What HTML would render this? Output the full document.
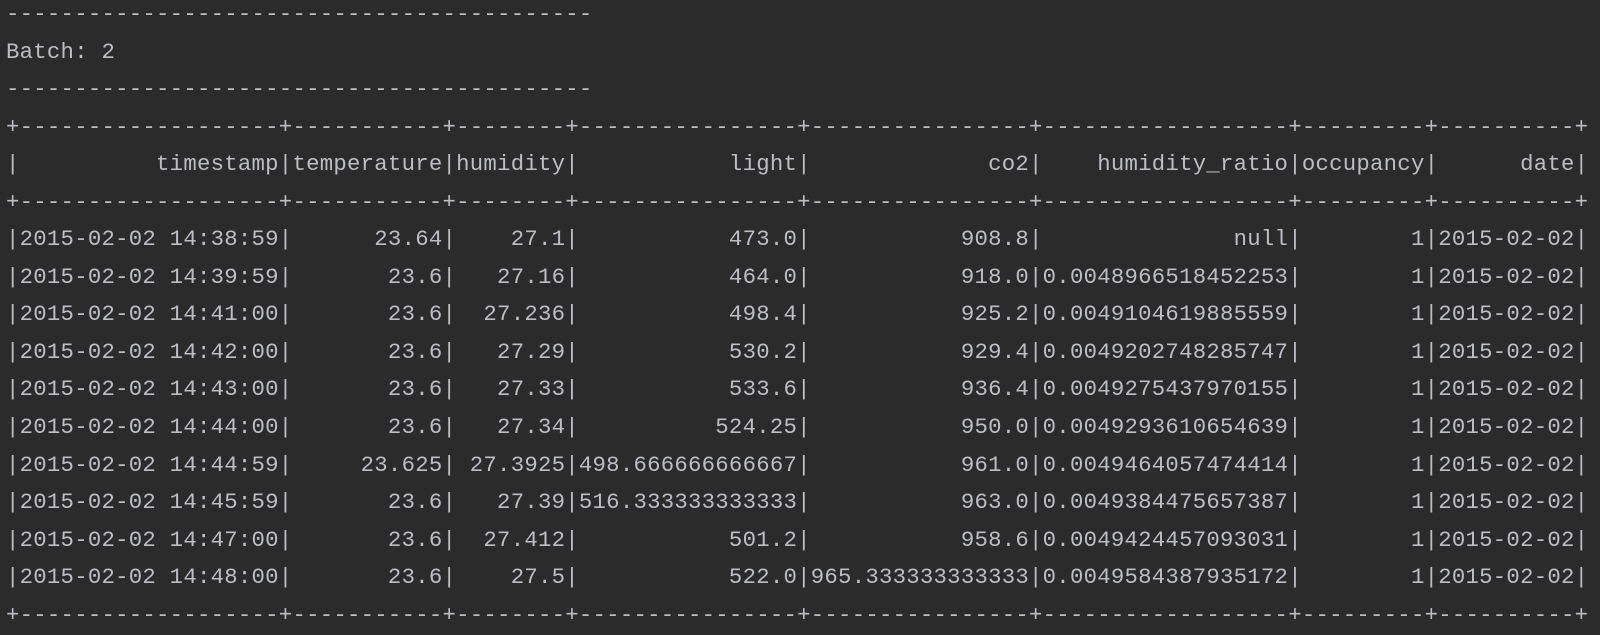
<!DOCTYPE html>
<html><head><style>
html,body{margin:0;padding:0;background:#2b2b2b;width:1600px;height:635px;overflow:hidden}
pre{margin:0;position:absolute;left:6px;top:-4px;font-family:"Liberation Mono",monospace;font-size:22.3px;letter-spacing:0.26px;line-height:37.55px;color:#bcbec4}
</style></head><body><pre>-------------------------------------------
Batch: 2
-------------------------------------------
+-------------------+-----------+--------+----------------+----------------+------------------+---------+----------+
|          timestamp|temperature|humidity|           light|             co2|    humidity_ratio|occupancy|      date|
+-------------------+-----------+--------+----------------+----------------+------------------+---------+----------+
|2015-02-02 14:38:59|      23.64|    27.1|           473.0|           908.8|              null|        1|2015-02-02|
|2015-02-02 14:39:59|       23.6|   27.16|           464.0|           918.0|0.0048966518452253|        1|2015-02-02|
|2015-02-02 14:41:00|       23.6|  27.236|           498.4|           925.2|0.0049104619885559|        1|2015-02-02|
|2015-02-02 14:42:00|       23.6|   27.29|           530.2|           929.4|0.0049202748285747|        1|2015-02-02|
|2015-02-02 14:43:00|       23.6|   27.33|           533.6|           936.4|0.0049275437970155|        1|2015-02-02|
|2015-02-02 14:44:00|       23.6|   27.34|          524.25|           950.0|0.0049293610654639|        1|2015-02-02|
|2015-02-02 14:44:59|     23.625| 27.3925|498.666666666667|           961.0|0.0049464057474414|        1|2015-02-02|
|2015-02-02 14:45:59|       23.6|   27.39|516.333333333333|           963.0|0.0049384475657387|        1|2015-02-02|
|2015-02-02 14:47:00|       23.6|  27.412|           501.2|           958.6|0.0049424457093031|        1|2015-02-02|
|2015-02-02 14:48:00|       23.6|    27.5|           522.0|965.333333333333|0.0049584387935172|        1|2015-02-02|
+-------------------+-----------+--------+----------------+----------------+------------------+---------+----------+
</pre></body></html>
